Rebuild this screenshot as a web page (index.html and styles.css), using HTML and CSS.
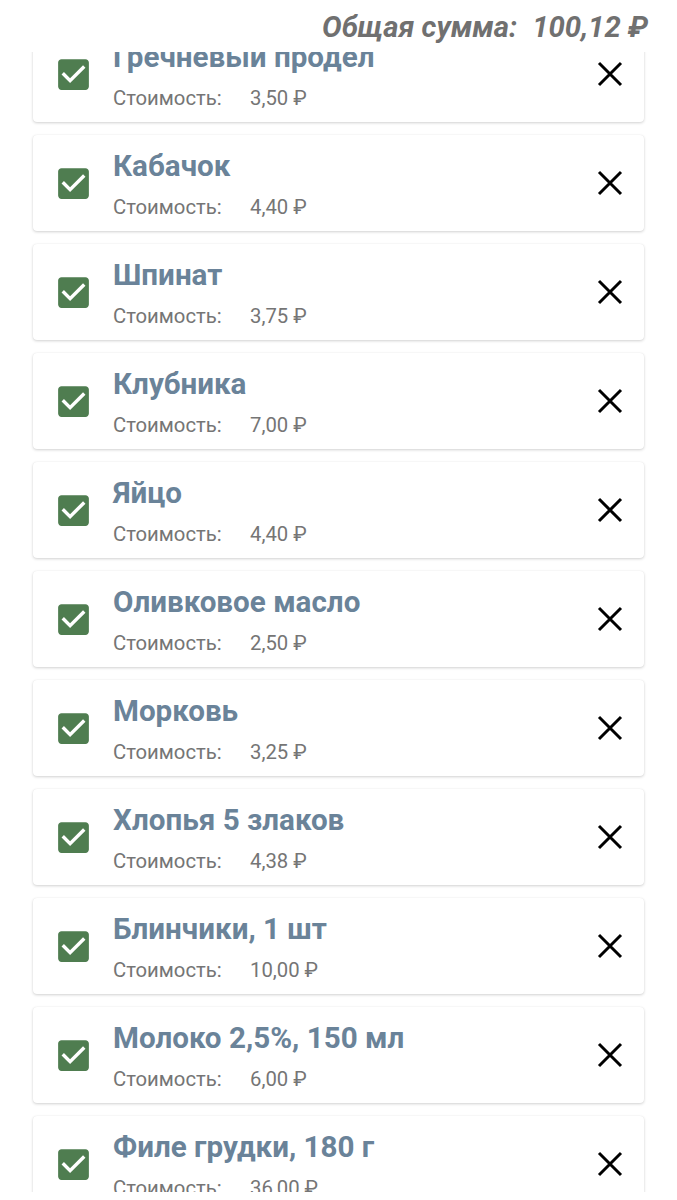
FILE: index.html
```html
<!DOCTYPE html>
<html lang="ru">
<head>
<meta charset="utf-8">
<link rel="stylesheet" href="styles.css">
</head>
<body>
<header class="total">
  <span class="total-label">Общая сумма:</span>
  <span class="total-value">100,12 ₽</span>
</header>
<main class="viewport">
  <div class="list">
    <div class="card">
      <svg class="check" viewBox="0 0 24 24"><path d="M19 3H5c-1.11 0-2 .9-2 2v14c0 1.1.89 2 2 2h14c1.11 0 2-.9 2-2V5c0-1.1-.89-2-2-2zm-9 14l-5-5 1.41-1.41L10 14.17l7.59-7.59L19 8l-9 9z"/></svg>
      <div class="info"><div class="name">Гречневый продел</div><div class="price"><span class="plabel">Стоимость:</span><span>3,50 ₽</span></div></div>
      <svg class="close" viewBox="0 0 26 26"><path d="M2 2L24 24M24 2L2 24"/></svg>
    </div>
    <div class="card">
      <svg class="check" viewBox="0 0 24 24"><path d="M19 3H5c-1.11 0-2 .9-2 2v14c0 1.1.89 2 2 2h14c1.11 0 2-.9 2-2V5c0-1.1-.89-2-2-2zm-9 14l-5-5 1.41-1.41L10 14.17l7.59-7.59L19 8l-9 9z"/></svg>
      <div class="info"><div class="name">Кабачок</div><div class="price"><span class="plabel">Стоимость:</span><span>4,40 ₽</span></div></div>
      <svg class="close" viewBox="0 0 26 26"><path d="M2 2L24 24M24 2L2 24"/></svg>
    </div>
    <div class="card">
      <svg class="check" viewBox="0 0 24 24"><path d="M19 3H5c-1.11 0-2 .9-2 2v14c0 1.1.89 2 2 2h14c1.11 0 2-.9 2-2V5c0-1.1-.89-2-2-2zm-9 14l-5-5 1.41-1.41L10 14.17l7.59-7.59L19 8l-9 9z"/></svg>
      <div class="info"><div class="name">Шпинат</div><div class="price"><span class="plabel">Стоимость:</span><span>3,75 ₽</span></div></div>
      <svg class="close" viewBox="0 0 26 26"><path d="M2 2L24 24M24 2L2 24"/></svg>
    </div>
    <div class="card">
      <svg class="check" viewBox="0 0 24 24"><path d="M19 3H5c-1.11 0-2 .9-2 2v14c0 1.1.89 2 2 2h14c1.11 0 2-.9 2-2V5c0-1.1-.89-2-2-2zm-9 14l-5-5 1.41-1.41L10 14.17l7.59-7.59L19 8l-9 9z"/></svg>
      <div class="info"><div class="name">Клубника</div><div class="price"><span class="plabel">Стоимость:</span><span>7,00 ₽</span></div></div>
      <svg class="close" viewBox="0 0 26 26"><path d="M2 2L24 24M24 2L2 24"/></svg>
    </div>
    <div class="card">
      <svg class="check" viewBox="0 0 24 24"><path d="M19 3H5c-1.11 0-2 .9-2 2v14c0 1.1.89 2 2 2h14c1.11 0 2-.9 2-2V5c0-1.1-.89-2-2-2zm-9 14l-5-5 1.41-1.41L10 14.17l7.59-7.59L19 8l-9 9z"/></svg>
      <div class="info"><div class="name">Яйцо</div><div class="price"><span class="plabel">Стоимость:</span><span>4,40 ₽</span></div></div>
      <svg class="close" viewBox="0 0 26 26"><path d="M2 2L24 24M24 2L2 24"/></svg>
    </div>
    <div class="card">
      <svg class="check" viewBox="0 0 24 24"><path d="M19 3H5c-1.11 0-2 .9-2 2v14c0 1.1.89 2 2 2h14c1.11 0 2-.9 2-2V5c0-1.1-.89-2-2-2zm-9 14l-5-5 1.41-1.41L10 14.17l7.59-7.59L19 8l-9 9z"/></svg>
      <div class="info"><div class="name">Оливковое масло</div><div class="price"><span class="plabel">Стоимость:</span><span>2,50 ₽</span></div></div>
      <svg class="close" viewBox="0 0 26 26"><path d="M2 2L24 24M24 2L2 24"/></svg>
    </div>
    <div class="card">
      <svg class="check" viewBox="0 0 24 24"><path d="M19 3H5c-1.11 0-2 .9-2 2v14c0 1.1.89 2 2 2h14c1.11 0 2-.9 2-2V5c0-1.1-.89-2-2-2zm-9 14l-5-5 1.41-1.41L10 14.17l7.59-7.59L19 8l-9 9z"/></svg>
      <div class="info"><div class="name">Морковь</div><div class="price"><span class="plabel">Стоимость:</span><span>3,25 ₽</span></div></div>
      <svg class="close" viewBox="0 0 26 26"><path d="M2 2L24 24M24 2L2 24"/></svg>
    </div>
    <div class="card">
      <svg class="check" viewBox="0 0 24 24"><path d="M19 3H5c-1.11 0-2 .9-2 2v14c0 1.1.89 2 2 2h14c1.11 0 2-.9 2-2V5c0-1.1-.89-2-2-2zm-9 14l-5-5 1.41-1.41L10 14.17l7.59-7.59L19 8l-9 9z"/></svg>
      <div class="info"><div class="name">Хлопья 5 злаков</div><div class="price"><span class="plabel">Стоимость:</span><span>4,38 ₽</span></div></div>
      <svg class="close" viewBox="0 0 26 26"><path d="M2 2L24 24M24 2L2 24"/></svg>
    </div>
    <div class="card">
      <svg class="check" viewBox="0 0 24 24"><path d="M19 3H5c-1.11 0-2 .9-2 2v14c0 1.1.89 2 2 2h14c1.11 0 2-.9 2-2V5c0-1.1-.89-2-2-2zm-9 14l-5-5 1.41-1.41L10 14.17l7.59-7.59L19 8l-9 9z"/></svg>
      <div class="info"><div class="name">Блинчики, 1 шт</div><div class="price"><span class="plabel">Стоимость:</span><span>10,00 ₽</span></div></div>
      <svg class="close" viewBox="0 0 26 26"><path d="M2 2L24 24M24 2L2 24"/></svg>
    </div>
    <div class="card">
      <svg class="check" viewBox="0 0 24 24"><path d="M19 3H5c-1.11 0-2 .9-2 2v14c0 1.1.89 2 2 2h14c1.11 0 2-.9 2-2V5c0-1.1-.89-2-2-2zm-9 14l-5-5 1.41-1.41L10 14.17l7.59-7.59L19 8l-9 9z"/></svg>
      <div class="info"><div class="name">Молоко 2,5%, 150 мл</div><div class="price"><span class="plabel">Стоимость:</span><span>6,00 ₽</span></div></div>
      <svg class="close" viewBox="0 0 26 26"><path d="M2 2L24 24M24 2L2 24"/></svg>
    </div>
    <div class="card">
      <svg class="check" viewBox="0 0 24 24"><path d="M19 3H5c-1.11 0-2 .9-2 2v14c0 1.1.89 2 2 2h14c1.11 0 2-.9 2-2V5c0-1.1-.89-2-2-2zm-9 14l-5-5 1.41-1.41L10 14.17l7.59-7.59L19 8l-9 9z"/></svg>
      <div class="info"><div class="name">Филе грудки, 180 г</div><div class="price"><span class="plabel">Стоимость:</span><span>36,00 ₽</span></div></div>
      <svg class="close" viewBox="0 0 26 26"><path d="M2 2L24 24M24 2L2 24"/></svg>
    </div>
  </div>
</main>
</body>
</html>
```

FILE: styles.css
```css
* { box-sizing: border-box; }
html, body {
  margin: 0;
  padding: 0;
  background: #ffffff;
  font-family: Roboto, "Noto Sans", sans-serif;
}
.total {
  height: 52px;
  display: flex;
  justify-content: flex-end;
  align-items: flex-start;
  padding: 10px 29px 0 0;
  font-size: 29.3px;
  line-height: 34px;
  font-weight: 700;
  font-style: italic;
  color: #707070;
}
.total-value { margin-left: 15px; }
.viewport {
  height: 1140px;
  overflow: hidden;
}
.list {
  margin-top: -26px;
  padding: 0 33px;
  display: flex;
  flex-direction: column;
  gap: 13px;
}
.card {
  height: 96px;
  background: #fff;
  border-radius: 4px;
  box-shadow: 0 1px 3px rgba(0,0,0,0.18), 0 0 1px rgba(0,0,0,0.08);
  display: flex;
  align-items: center;
  padding: 0 21px 0 20px;
}
.check {
  width: 41px;
  height: 41px;
  fill: #4f7d50;
  flex: none;
}
.info {
  flex: 1;
  align-self: flex-start;
  padding-top: 16px;
  margin-left: 19px;
}
.name {
  font-size: 29.6px;
  line-height: 30px;
  font-weight: 700;
  color: #6a8399;
}
.price {
  margin-top: 14px;
  font-size: 20.3px;
  line-height: 24px;
  color: #757575;
  display: flex;
}
.plabel { width: 137px; }
.close {
  width: 26px;
  height: 26px;
  flex: none;
  stroke: #000;
  stroke-width: 3;
  fill: none;
}
```
